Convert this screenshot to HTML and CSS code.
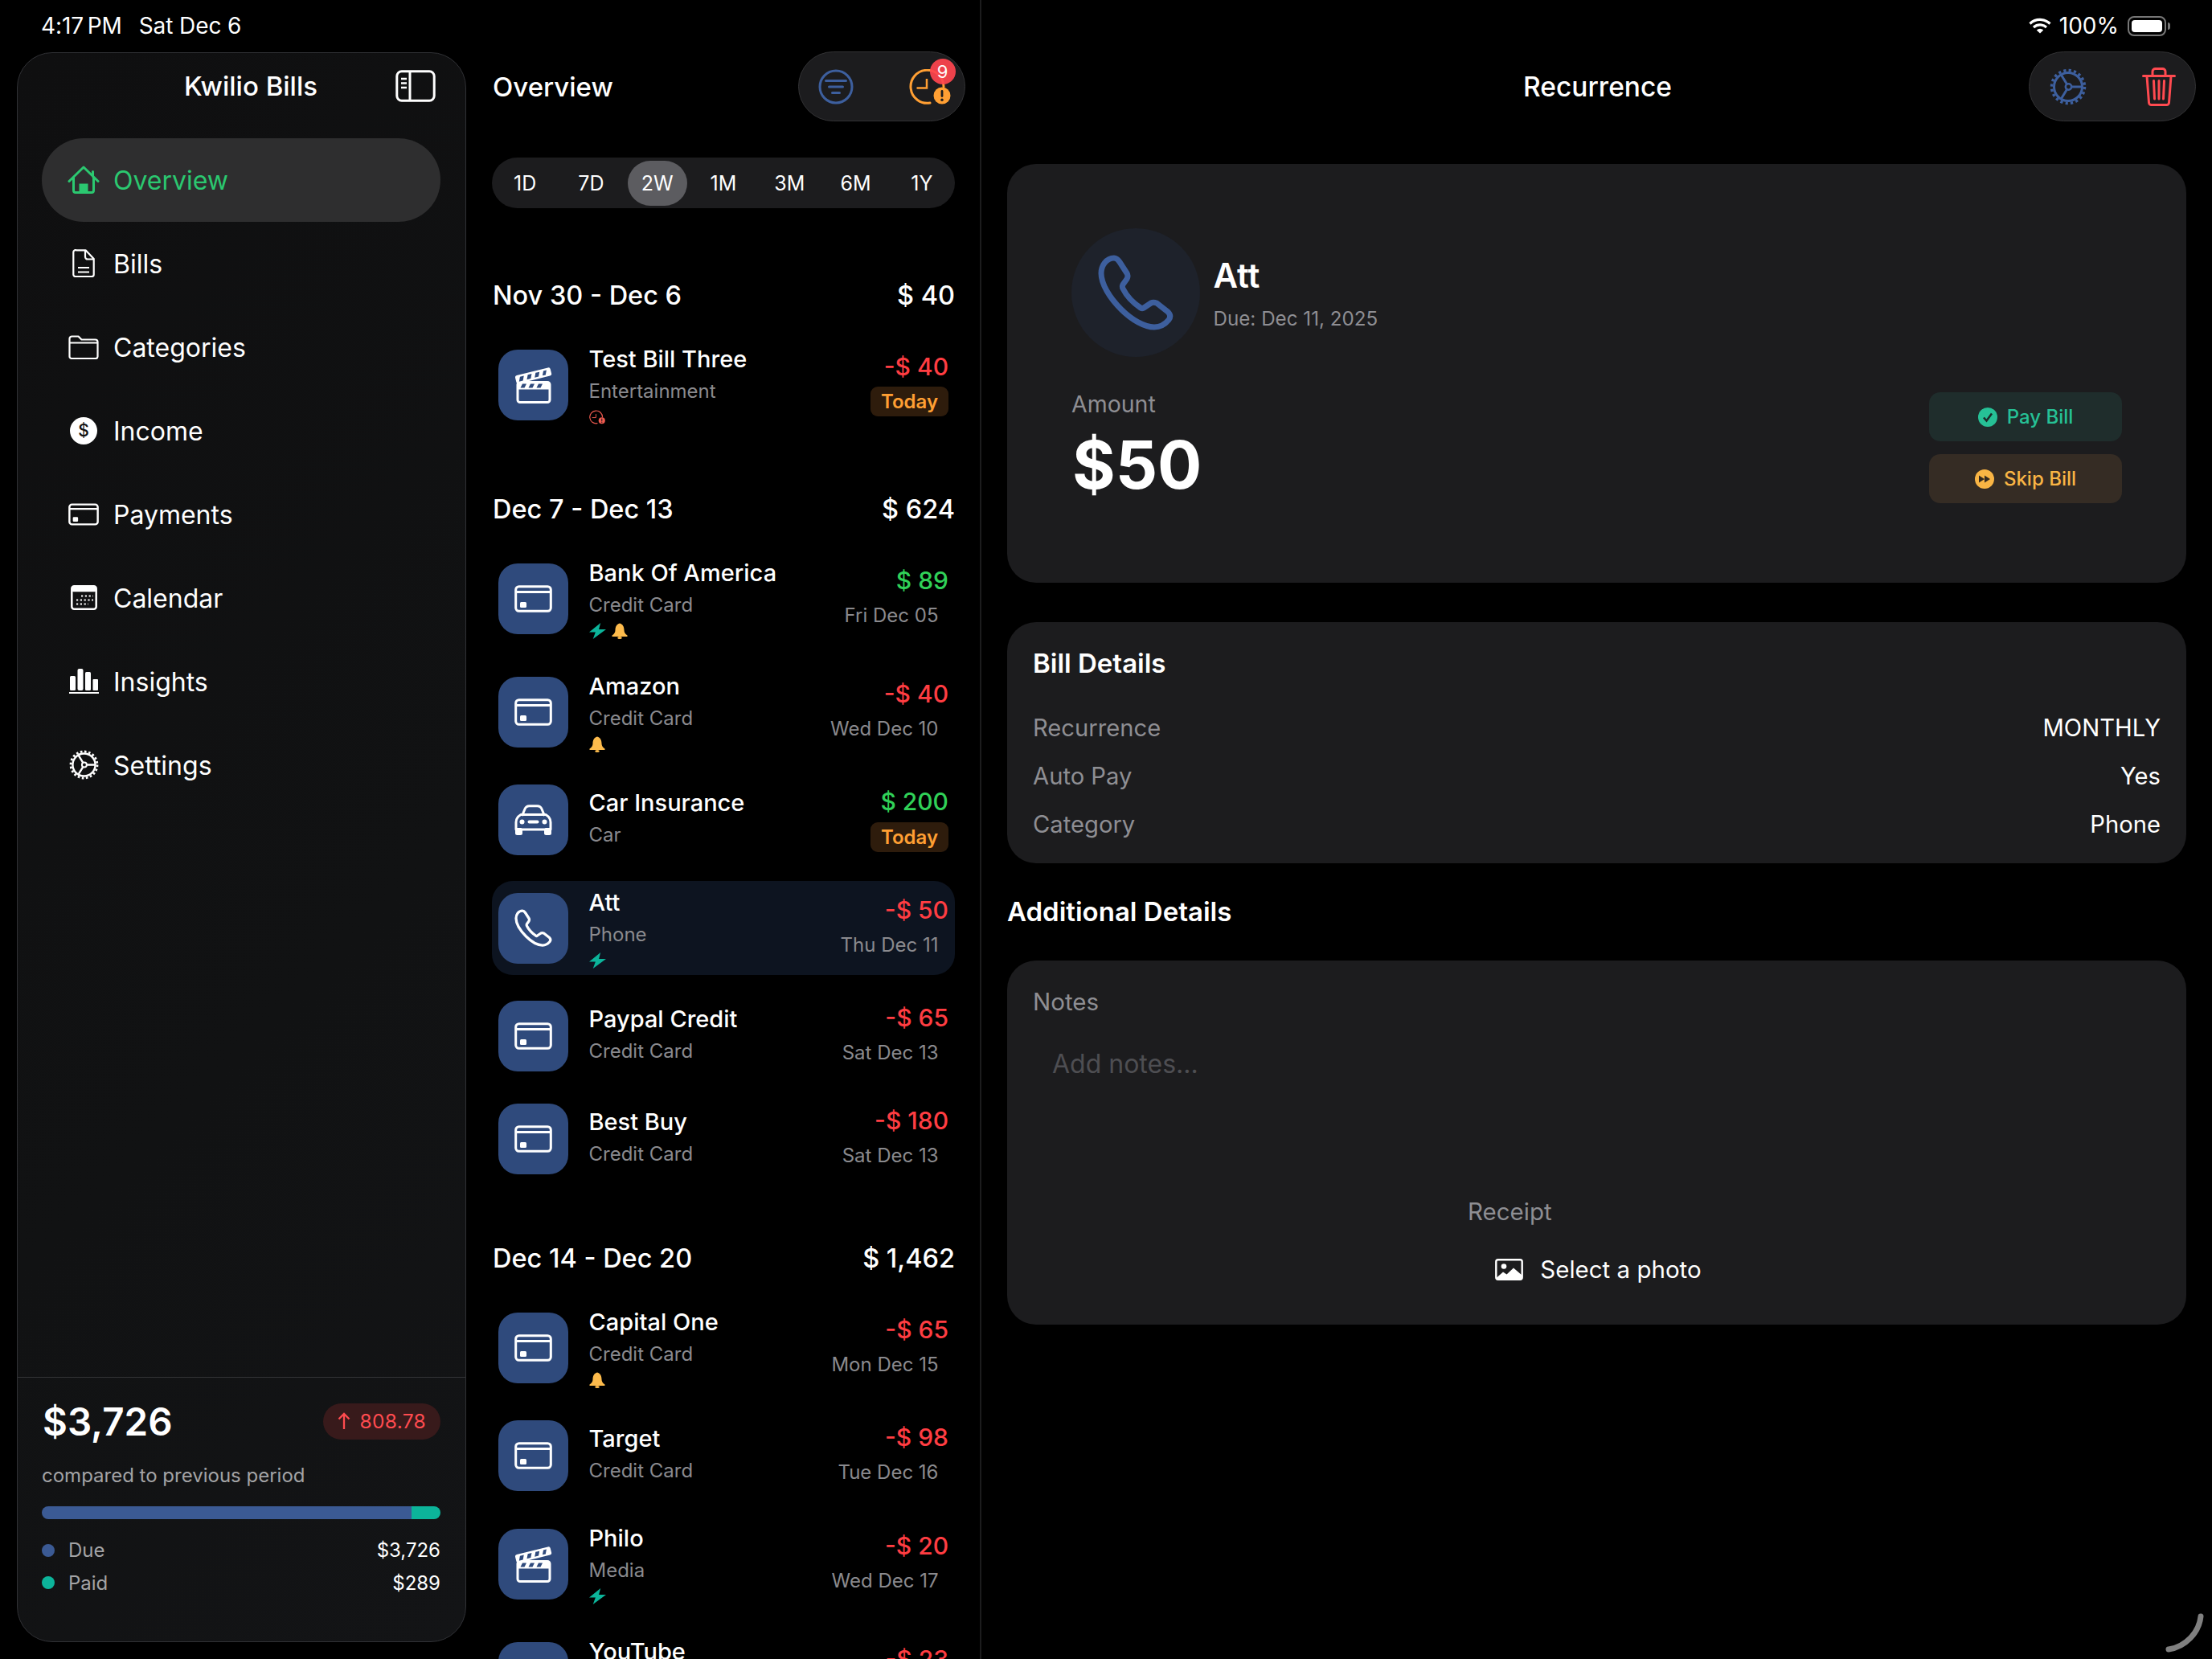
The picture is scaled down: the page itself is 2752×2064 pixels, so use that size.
FILE: index.html
```html
<!DOCTYPE html>
<html lang="en">
<head>
<meta charset="utf-8">
<title>Kwilio Bills</title>
<link rel="stylesheet" href="styles.css">
</head>
<body>
<svg class="defs" xmlns="http://www.w3.org/2000/svg">
  <symbol id="home" viewBox="0 0 40 35"><path d="M2 19.5 20 2l18 17.5M31.500 7.500v6M7.500 15v16a2.500 2.500 0 0 0 2.500 2.500h20a2.500 2.500 0 0 0 2.500-2.500V15" fill="none" stroke="currentColor" stroke-width="3" stroke-linecap="round" stroke-linejoin="round"/><rect x="14.500" y="22.500" width="11" height="11" fill="currentColor"/></symbol>
  <symbol id="file" viewBox="0 0 28 35"><path d="M5 1.300h11.500L26.700 12v19.500a2.500 2.500 0 0 1-2.500 2.500H4a2.500 2.500 0 0 1-2.700-2.500V4A2.700 2.700 0 0 1 5 1.300ZM16 1.500V9.500a3 3 0 0 0 3 3h7.500M7 23h14M7 28.500h14" fill="none" stroke="currentColor" stroke-width="2.200" stroke-linejoin="round"/></symbol>
  <symbol id="folder" viewBox="0 0 38 30"><path d="M1.500 4.500a3 3 0 0 1 3-3h8l4 4h17a3 3 0 0 1 3 3v18a2.500 2.500 0 0 1-2.500 2.500H4a2.500 2.500 0 0 1-2.500-2.500ZM1.500 9.500h35" fill="none" stroke="currentColor" stroke-width="2.200" stroke-linejoin="round"/></symbol>
  <symbol id="card" viewBox="0 0 47 34"><rect x="1.700" y="1.700" width="43.600" height="30.600" rx="4" fill="none" stroke="currentColor" stroke-width="3"/><path d="M2 8.500h43" stroke="currentColor" stroke-width="3"/><rect x="7" y="21" width="8" height="7" rx="1.500" fill="currentColor"/></symbol>
  <symbol id="calendar" viewBox="0 0 33 31"><rect x="1.300" y="1.300" width="30.400" height="28.400" rx="3" fill="none" stroke="currentColor" stroke-width="2.500"/><rect x="1.300" y="1.300" width="30.400" height="7" rx="2" fill="currentColor"/><path d="M13 13.500h15M7 18.500h21M7 23.500h15" stroke="currentColor" stroke-width="2.200" stroke-dasharray="2.200 2.600" fill="none"/></symbol>
  <symbol id="bars" viewBox="0 0 37 31"><rect x="1" y="9" width="7" height="18" rx="1.500" fill="currentColor"/><rect x="10.500" y="0" width="7" height="27" rx="2" fill="currentColor"/><rect x="20" y="4" width="7" height="23" rx="1.500" fill="currentColor"/><rect x="29.500" y="13" width="6.500" height="14" rx="1" fill="currentColor"/><rect x="0" y="29" width="37" height="2" fill="currentColor"/></symbol>
  <symbol id="gear" viewBox="0 0 46 46"><circle cx="23" cy="23" r="17.500" fill="none" stroke="currentColor" stroke-width="3"/><circle cx="23" cy="23" r="20.500" fill="none" stroke="currentColor" stroke-width="3.500" stroke-dasharray="3.220 3.220"/><circle cx="23.500" cy="23" r="3.700" fill="none" stroke="currentColor" stroke-width="2.500"/><path d="M27.500 23H41M21.500 19.800 14 7.500M21.500 26.200 14 38.500" stroke="currentColor" stroke-width="3" fill="none"/></symbol>
  <symbol id="filter" viewBox="0 0 44 44"><circle cx="22" cy="22" r="20" fill="none" stroke="currentColor" stroke-width="3"/><path d="M9.500 14.500h25M13.500 22h17M17.500 29.500h9" stroke="currentColor" stroke-width="3" stroke-linecap="round"/></symbol>
  <symbol id="clock" viewBox="0 0 52 44"><path d="M43 22A20.500 20.500 0 1 0 26 42" fill="none" stroke="currentColor" stroke-width="3" stroke-linecap="round"/><path d="M22 12v11.500H9.500" fill="none" stroke="currentColor" stroke-width="2.500"/><circle cx="41" cy="33" r="10.500" fill="currentColor"/><rect x="39.600" y="26" width="2.800" height="9" rx="1.400" fill="#1c1c1e"/><circle cx="41" cy="38.300" r="1.700" fill="#1c1c1e"/></symbol>
  <symbol id="trash" viewBox="0 0 42 48"><path d="M1.500 10.500h39M13 10V5a3.500 3.500 0 0 1 3.500-3.500h9A3.500 3.500 0 0 1 29 5v5M6 11l2.500 32.500a3 3 0 0 0 3 3h19a3 3 0 0 0 3-3L36 11M14.500 16.500 15.500 39M21 16.500V39M27.500 16.500 26.500 39" fill="none" stroke="currentColor" stroke-width="3" stroke-linecap="round" stroke-linejoin="round"/></symbol>
  <symbol id="clapper" viewBox="0 0 46 46"><rect x="3" y="19.500" width="40" height="25" rx="3" fill="none" stroke="currentColor" stroke-width="3"/><rect x="3" y="19.500" width="40" height="9" fill="currentColor"/><path d="M9 21.500h5l-2.500 5h-5ZM19 21.500h5l-2.500 5h-5ZM29 21.500h5l-2.500 5h-5Z" fill="#2f4a7c"/><g transform="rotate(-14 23 11)"><rect x="0" y="6" width="45" height="10.500" rx="2.500" fill="currentColor"/><path d="M6 8.500h5l-2.500 5.500h-5ZM16 8.500h5l-2.500 5.500h-5ZM26 8.500h5l-2.500 5.500h-5ZM36 8.500h4l-2.500 5.500h-4Z" fill="#2f4a7c"/></g></symbol>
  <symbol id="car" viewBox="0 0 47 38"><path d="M9.500 14 13 5.500Q14.500 1.700 18.500 1.700h10q4 0 5.500 3.800L37.500 14" fill="none" stroke="currentColor" stroke-width="3"/><path d="M2 22q0-6 6-9.500h31q6 3.500 6 9.500v9H2Z" fill="none" stroke="currentColor" stroke-width="3" stroke-linejoin="round"/><rect x="1" y="29" width="9" height="9" rx="2.500" fill="currentColor"/><rect x="37" y="29" width="9" height="9" rx="2.500" fill="currentColor"/><circle cx="9.500" cy="21.500" r="3" fill="currentColor"/><circle cx="37.500" cy="21.500" r="3" fill="currentColor"/><rect x="16.500" y="19.500" width="14" height="4" rx="2" fill="currentColor"/></symbol>
  <symbol id="phone" viewBox="0 0 94 94"><path d="M20 4C23 4 25 6 27 9L36 23C38 26 37 28 36 30L31 37C30 39 30 40 31 42C36 52 44 60 53 66C54 67 56 67 57 66L66 60C68 59 70 59 73 60L87 71C90 74 91 77 88 81C83 87 77 90 70 90C58 90 42 81 29 68C14 53 4 36 4 23C4 14 10 4 20 4Z" fill="none" stroke="currentColor" stroke-width="var(--phone-w,7)" stroke-linejoin="round"/></symbol>
  <symbol id="bolt" viewBox="0 0 20 19"><path d="M13.500 0 0 11h7.500L4.500 19 20 7.500h-8.500Z" fill="currentColor"/></symbol>
  <symbol id="bell" viewBox="0 0 20 20"><path d="M10 0.500C6 1.500 4.500 5 4.500 9 4.500 12 3 14 .5 15.500V17h19v-1.500C17 14 15.500 12 15.500 9 15.500 5 14 1.500 10 .5Z" fill="currentColor"/><ellipse cx="10" cy="18.500" rx="2.800" ry="1.500" fill="currentColor"/></symbol>
</svg>

<div class="status">
  <div class="status-left"><span class="time">4:17 PM</span><span>Sat Dec 6</span></div>
  <div class="status-right">
    <svg class="wifi" viewBox="0 0 28 20"><path d="M1.500 7.500a18 18 0 0 1 25 0M6 12a12 12 0 0 1 16 0" fill="none" stroke="#fff" stroke-width="3.200"/><path d="M14 19.500 9.800 15.500a6 6 0 0 1 8.400 0Z" fill="#fff"/></svg>
    <span>100%</span>
    <div class="battery"><div class="battery-fill"></div></div>
    <div class="battery-nub"></div>
  </div>
</div>

<div class="app">
  <aside class="sidebar">
    <div class="side-head">
      <div class="side-title">Kwilio Bills</div>
      <svg class="toggle" viewBox="0 0 50 40"><rect x="1.800" y="1.800" width="46.400" height="36.400" rx="6" fill="none" stroke="#fff" stroke-width="3"/><path d="M18 2v36" stroke="#fff" stroke-width="3"/><path d="M7 11h7M7 16.500h7M7 22h7" stroke="#fff" stroke-width="2.500"/></svg>
    </div>
    <nav class="nav">
      <div class="nav-item active"><span class="nav-icon"><svg class="i-home"><use href="#home"/></svg></span><span class="nav-label">Overview</span></div>
      <div class="nav-item"><span class="nav-icon"><svg class="i-file"><use href="#file"/></svg></span><span class="nav-label">Bills</span></div>
      <div class="nav-item"><span class="nav-icon"><svg class="i-folder"><use href="#folder"/></svg></span><span class="nav-label">Categories</span></div>
      <div class="nav-item"><span class="nav-icon"><span class="coin">$</span></span><span class="nav-label">Income</span></div>
      <div class="nav-item"><span class="nav-icon"><svg class="i-navcard"><use href="#card"/></svg></span><span class="nav-label">Payments</span></div>
      <div class="nav-item"><span class="nav-icon"><svg class="i-cal"><use href="#calendar"/></svg></span><span class="nav-label">Calendar</span></div>
      <div class="nav-item"><span class="nav-icon"><svg class="i-bars"><use href="#bars"/></svg></span><span class="nav-label">Insights</span></div>
      <div class="nav-item"><span class="nav-icon"><svg class="i-gear"><use href="#gear"/></svg></span><span class="nav-label">Settings</span></div>
    </nav>
    <div class="side-foot">
      <div class="foot-top">
        <div class="foot-total">$3,726</div>
        <div class="foot-badge"><svg class="up" viewBox="0 0 16 22"><path d="M8 21V2M1.500 8.500 8 2l6.500 6.500" fill="none" stroke="currentColor" stroke-width="2.300"/></svg>808.78</div>
      </div>
      <div class="foot-note">compared to previous period</div>
      <div class="bar"><div class="bar-due"></div><div class="bar-paid"></div></div>
      <div class="legend"><span class="dot dot-due"></span><span class="legend-label">Due</span><span class="legend-val">$3,726</span></div>
      <div class="legend"><span class="dot dot-paid"></span><span class="legend-label">Paid</span><span class="legend-val">$289</span></div>
    </div>
  </aside>

  <main class="middle">
    <header class="mid-head">
      <h1 class="mid-title">Overview</h1>
      <div class="pill">
        <svg class="pill-icon blue i-filter"><use href="#filter"/></svg>
        <div class="pill-clock">
          <svg class="pill-icon orange"><use href="#clock"/></svg>
          <span class="count">9</span>
        </div>
      </div>
    </header>
    <div class="segments">
      <span class="seg">1D</span><span class="seg">7D</span><span class="seg on">2W</span><span class="seg">1M</span><span class="seg">3M</span><span class="seg">6M</span><span class="seg">1Y</span>
    </div>

    <section class="group first">
      <div class="week"><span>Nov 30 - Dec 6</span><span>$ 40</span></div>
      <div class="row three">
        <span class="tile"><svg class="t-clapper"><use href="#clapper"/></svg></span>
        <div class="info"><div class="name">Test Bill Three</div><div class="cat">Entertainment</div><div class="marks"><svg class="m-clock"><use href="#clock"/></svg></div></div>
        <div class="money"><div class="amt neg">-$ 40</div><div class="today">Today</div></div>
      </div>
    </section>

    <section class="group">
      <div class="week"><span>Dec 7 - Dec 13</span><span>$ 624</span></div>
      <div class="row three">
        <span class="tile"><svg class="t-card"><use href="#card"/></svg></span>
        <div class="info"><div class="name">Bank Of America</div><div class="cat">Credit Card</div><div class="marks"><svg class="m-bolt"><use href="#bolt"/></svg><svg class="m-bell"><use href="#bell"/></svg></div></div>
        <div class="money"><div class="amt pos">$ 89</div><div class="when">Fri Dec 05</div></div>
      </div>
      <div class="row three">
        <span class="tile"><svg class="t-card"><use href="#card"/></svg></span>
        <div class="info"><div class="name">Amazon</div><div class="cat">Credit Card</div><div class="marks"><svg class="m-bell"><use href="#bell"/></svg></div></div>
        <div class="money"><div class="amt neg">-$ 40</div><div class="when">Wed Dec 10</div></div>
      </div>
      <div class="row two">
        <span class="tile"><svg class="t-car"><use href="#car"/></svg></span>
        <div class="info"><div class="name">Car Insurance</div><div class="cat">Car</div></div>
        <div class="money"><div class="amt pos">$ 200</div><div class="today">Today</div></div>
      </div>
      <div class="row three selected">
        <span class="tile"><svg class="t-phone"><use href="#phone"/></svg></span>
        <div class="info"><div class="name">Att</div><div class="cat">Phone</div><div class="marks"><svg class="m-bolt"><use href="#bolt"/></svg></div></div>
        <div class="money"><div class="amt neg">-$ 50</div><div class="when">Thu Dec 11</div></div>
      </div>
      <div class="row two">
        <span class="tile"><svg class="t-card"><use href="#card"/></svg></span>
        <div class="info"><div class="name">Paypal Credit</div><div class="cat">Credit Card</div></div>
        <div class="money"><div class="amt neg">-$ 65</div><div class="when">Sat Dec 13</div></div>
      </div>
      <div class="row two">
        <span class="tile"><svg class="t-card"><use href="#card"/></svg></span>
        <div class="info"><div class="name">Best Buy</div><div class="cat">Credit Card</div></div>
        <div class="money"><div class="amt neg">-$ 180</div><div class="when">Sat Dec 13</div></div>
      </div>
    </section>

    <section class="group">
      <div class="week"><span>Dec 14 - Dec 20</span><span>$ 1,462</span></div>
      <div class="row three">
        <span class="tile"><svg class="t-card"><use href="#card"/></svg></span>
        <div class="info"><div class="name">Capital One</div><div class="cat">Credit Card</div><div class="marks"><svg class="m-bell"><use href="#bell"/></svg></div></div>
        <div class="money"><div class="amt neg">-$ 65</div><div class="when">Mon Dec 15</div></div>
      </div>
      <div class="row two">
        <span class="tile"><svg class="t-card"><use href="#card"/></svg></span>
        <div class="info"><div class="name">Target</div><div class="cat">Credit Card</div></div>
        <div class="money"><div class="amt neg">-$ 98</div><div class="when">Tue Dec 16</div></div>
      </div>
      <div class="row three">
        <span class="tile"><svg class="t-clapper"><use href="#clapper"/></svg></span>
        <div class="info"><div class="name">Philo</div><div class="cat">Media</div><div class="marks"><svg class="m-bolt"><use href="#bolt"/></svg></div></div>
        <div class="money"><div class="amt neg">-$ 20</div><div class="when">Wed Dec 17</div></div>
      </div>
      <div class="row three">
        <span class="tile"></span>
        <div class="info"><div class="name">YouTube</div><div class="cat">&nbsp;</div><div class="marks"></div></div>
        <div class="money"><div class="amt neg">-$ 23</div><div class="when">&nbsp;</div></div>
      </div>
    </section>
  </main>

  <section class="detail">
    <header class="detail-head">
      <div></div>
      <h2 class="detail-title">Recurrence</h2>
      <div class="pill pill-end">
        <svg class="pill-icon blue i-pgear"><use href="#gear"/></svg>
        <svg class="pill-icon red i-trash"><use href="#trash"/></svg>
      </div>
    </header>

    <div class="card hero">
      <div class="hero-left">
        <div class="hero-top">
          <span class="avatar"><svg class="avatar-phone"><use href="#phone"/></svg></span>
          <div>
            <div class="hero-name">Att</div>
            <div class="hero-due">Due: Dec 11, 2025</div>
          </div>
        </div>
        <div class="hero-label">Amount</div>
        <div class="hero-amount">$50</div>
      </div>
      <div class="hero-actions">
        <div class="action pay">
          <svg class="action-icon" viewBox="0 0 24 24"><circle cx="12" cy="12" r="12" fill="#26c196"/><path d="M7 12.500 10.500 16.500 17 7.500" fill="none" stroke="#1c2b29" stroke-width="2.600"/></svg>
          Pay Bill
        </div>
        <div class="action skip">
          <svg class="action-icon" viewBox="0 0 24 24"><circle cx="12" cy="12" r="12" fill="#f9b544"/><path d="M5 7.500v9l7-4.500ZM12 7.500v9l7-4.500Z" fill="#33291f"/></svg>
          Skip Bill
        </div>
      </div>
    </div>

    <div class="card details">
      <h3 class="card-title">Bill Details</h3>
      <div class="detail-rows">
        <div class="detail-row"><span class="muted">Recurrence</span><span>MONTHLY</span></div>
        <div class="detail-row"><span class="muted">Auto Pay</span><span>Yes</span></div>
        <div class="detail-row"><span class="muted">Category</span><span>Phone</span></div>
      </div>
    </div>

    <h3 class="section-title">Additional Details</h3>

    <div class="card notes">
      <div class="muted notes-label">Notes</div>
      <div class="placeholder">Add notes...</div>
      <div class="muted receipt">Receipt</div>
      <div class="select-photo">
        <svg class="photo-icon" viewBox="0 0 35 27"><rect x="1.300" y="1.300" width="32.400" height="24.400" rx="2.500" fill="none" stroke="#fff" stroke-width="2.400"/><circle cx="11" cy="9.500" r="3.300" fill="#fff"/><path d="M1.500 24 10 16.500 14.500 19.500 23 11.500 33.500 20.500V26H1.500Z" fill="#fff"/></svg>
        Select a photo
      </div>
    </div>
  </section>
</div>

<svg class="pencil" viewBox="0 0 60 60"><path d="M49 10C47 30 30 48 9 51" fill="none" stroke="#808080" stroke-width="7" stroke-linecap="round"/></svg>
</body>
</html>
```

FILE: styles.css
```css
* { box-sizing: border-box; }
html, body { margin: 0; padding: 0; }
body {
  width: 2752px;
  height: 2064px;
  overflow: hidden;
  background: #000;
  color: #fff;
  font-family: Inter, "Liberation Sans", sans-serif;
  position: relative;
}
h1, h2, h3 { margin: 0; font: inherit; }
svg { display: block; flex: none; }
.defs { display: none; }

/* status bar */
.status {
  position: absolute;
  top: 0; left: 0; right: 0;
  height: 64px;
  padding: 0 52px 0 51px;
  display: flex;
  align-items: center;
  justify-content: space-between;
  font-size: 28px;
  z-index: 2;
}
.status-left { display: flex; gap: 21px; letter-spacing: -.1px; }
.time { word-spacing: -3px; }
.status-right { display: flex; align-items: center; }
.wifi { width: 28px; height: 20px; margin-right: 10px; }
.battery {
  width: 48px; height: 25px;
  margin-left: 11px;
  border: 2px solid #777;
  border-radius: 8px;
  padding: 3px;
}
.battery-fill { width: 100%; height: 100%; background: #fff; border-radius: 4px; }
.battery-nub { width: 3px; height: 9px; margin-left: 2px; background: #777; border-radius: 0 3px 3px 0; }

.app { display: flex; height: 2064px; }

/* sidebar */
.sidebar {
  width: 559px;
  margin: 65px 0 21px 21px;
  flex: none;
  display: flex;
  flex-direction: column;
  background: linear-gradient(135deg, #0f0f10 0%, #111213 60%, #131416 100%);
  border: 1.5px solid #303135;
  border-radius: 44px;
}
.side-head {
  height: 105.500px;
  padding: 21px 37px 0 110px;
  display: flex;
  align-items: flex-start;
}
.side-title { flex: 1; text-align: center; font-size: 33px; line-height: 40px; font-weight: 500; }
.toggle { width: 50px; height: 40px; }
.nav { padding: 0 31px 0 30px; flex: 1; }
.nav-item {
  height: 104px;
  display: flex;
  align-items: center;
  padding-left: 32px;
  gap: 17px;
  font-size: 32px;
  border-radius: 52px;
  color: #fff;
}
.nav-label { padding-top: 2px; }
.nav-item.active {
  background: #2e2e2f;
  color: #2bc870;
}
.nav-icon { width: 40px; display: flex; justify-content: center; align-items: center; }
.i-home { width: 40px; height: 35px; }
.i-file { width: 28px; height: 35px; }
.i-folder { width: 38px; height: 30px; }
.i-navcard { width: 38px; height: 28px; }
.i-cal { width: 33px; height: 31px; }
.i-bars { width: 37px; height: 31px; }
.i-gear { width: 37px; height: 37px; }
.coin {
  width: 34px; height: 34px;
  border-radius: 50%;
  background: #fff;
  color: #111;
  font-size: 21px;
  font-weight: 500;
  display: flex;
  align-items: center;
  justify-content: center;
}

.side-foot {
  height: 329px;
  flex: none;
  border-top: 1.5px solid #333437;
  padding: 31.500px 31px 0 30px;
}
.foot-top { display: flex; justify-content: space-between; align-items: center; height: 45px; }
.foot-total { font-size: 47.500px; font-weight: 600; padding-left: 1px; }
.foot-badge {
  height: 45px;
  padding: 0 18px 0 18px;
  border-radius: 23px;
  background: #381a1b;
  color: #ff4b4f;
  font-size: 24.500px;
  display: flex;
  align-items: center;
  gap: 12px;
  letter-spacing: .3px;
}
.up { width: 16px; height: 22px; }
.foot-note { margin-top: 27px; font-size: 24px; line-height: 36px; color: #a3a3a5; }
.bar { margin-top: 20px; height: 16px; border-radius: 8px; overflow: hidden; display: flex; }
.bar-due { width: 460px; background: #3b5a94; }
.bar-paid { flex: 1; background: #0cb49a; }
.legend { display: flex; align-items: center; height: 40.500px; font-size: 24px; }
.bar + .legend { margin-top: 19px; }
.dot { width: 16px; height: 16px; border-radius: 50%; margin-right: 17px; }
.dot-due { background: #3b5a94; }
.dot-paid { background: #0cb49a; }
.legend-label { flex: 1; color: #a3a3a5; }

/* middle column */
.middle {
  width: 641px;
  flex: none;
  padding: 64px 31px 0 32px;
  border-right: 2px solid #1c1c1d;
}
.mid-head { display: flex; justify-content: space-between; align-items: center; height: 87px; padding-left: 1px; margin-right: -13px; }
.mid-title { font-size: 33px; font-weight: 500; }
.pill {
  width: 208px;
  height: 87px;
  border-radius: 44px;
  background: #1c1c1e;
  border: 1.5px solid #323234;
  padding: 0 8px 0 20.500px;
  display: flex;
  align-items: center;
  gap: 69px;
  flex: none;
}
.pill-icon { width: 52px; height: 44px; }
.blue { color: #3d5f9e; }
.orange { color: #ff9f33; }
.red { color: #ff4a50; }
.i-filter { margin: 0 3px; width: 44px; }
.pill-clock { position: relative; width: 52px; height: 44px; margin-left: -3px; flex: none; }
.count {
  position: absolute;
  top: -13px; right: -6px;
  width: 32px; height: 32px;
  border-radius: 50%;
  background: rgba(255, 69, 79, .92);
  font-size: 22px;
  display: flex;
  align-items: center;
  justify-content: center;
}
.segments {
  margin-top: 45px;
  height: 63px;
  border-radius: 32px;
  background: #1c1c1e;
  display: flex;
  align-items: center;
  font-size: 25px;
}
.seg { flex: 1; height: 56px; display: flex; align-items: center; justify-content: center; margin: 0 4px; border-radius: 28px; }
.seg.on { background: #5c5c60; }

.group { margin-top: 74px; }
.group.first { margin-top: 86px; }
.week { display: flex; justify-content: space-between; height: 44px; align-items: center; font-size: 32.500px; font-weight: 500; margin-bottom: 31px; padding-left: 1px; }
.row {
  display: flex;
  align-items: center;
  padding: 0 8px;
  gap: 25.500px;
  margin-top: 24px;
  border-radius: 26px;
}
.week + .row { margin-top: 0; }
.row.three { height: 117px; }
.row.two { height: 104px; }
.row.selected { background: #0d1420; }
.tile {
  width: 87px;
  height: 88px;
  border-radius: 24px;
  background: #2f4a7c;
  display: flex;
  align-items: center;
  justify-content: center;
  color: #fff;
  flex: none;
}
.t-card { width: 47px; height: 34px; }
.t-clapper { width: 46px; height: 46px; }
.t-car { width: 47px; height: 38px; }
.t-phone { width: 47px; height: 47px; --phone-w: 6.500; }
.info { flex: 1; min-width: 0; }
.three .info { padding-top: 4px; }
.two .info { padding-bottom: 2px; }
.name { font-size: 29px; line-height: 40px; font-weight: 500; white-space: nowrap; }
.cat { font-size: 24px; line-height: 40px; color: #8a8a8e; white-space: nowrap; }
.marks { height: 32px; margin-top: -4px; display: flex; align-items: center; gap: 7px; }
.m-bolt { width: 21px; height: 20px; color: #0cb49a; }
.m-bell { width: 20px; height: 20px; color: #fdbb4c; }
.m-clock { width: 20px; height: 20px; color: #ee5a4f; }
.money { display: flex; flex-direction: column; align-items: flex-end; padding-bottom: 2px; }
.amt { font-size: 30px; line-height: 38px; font-weight: 500; }
.neg { color: #ff3d42; }
.pos { color: #30d158; }
.when { font-size: 24px; line-height: 38px; color: #8a8a8e; margin-top: 6px; padding-right: 12.500px; white-space: nowrap; }
.today {
  margin-top: 6.500px;
  height: 37px;
  width: 97px;
  border-radius: 9px;
  background: #2e1c0c;
  color: #ff9f33;
  font-size: 24px;
  font-weight: 600;
  display: flex;
  align-items: center;
  justify-content: center;
}

/* detail */
.detail { flex: 1; min-width: 0; padding: 64px 32px 0; }
.detail-head {
  display: grid;
  grid-template-columns: 1fr auto 1fr;
  align-items: center;
  height: 87px;
  margin: 0 -12px 0 -10px;
}
.detail-title { font-size: 33.500px; font-weight: 500; }
.pill-end { justify-self: end; gap: 68.500px; padding: 0 0 0 25px; justify-content: flex-start; }
.i-pgear { width: 46px; height: 46px; }
.i-trash { width: 42px; height: 48px; }
.card { background: #1c1c1e; border-radius: 36px; }
.hero {
  margin-top: 53px;
  height: 521px;
  padding: 80px 80px 0;
  display: flex;
  justify-content: space-between;
  align-items: flex-start;
}
.hero-top { display: flex; align-items: center; gap: 16.500px; height: 160px; }
.avatar { width: 160px; height: 160px; border-radius: 50%; background: #1e222b; color: #3d5f9e; display: flex; align-items: center; justify-content: center; }
.avatar-phone { width: 94px; height: 94px; }
.hero-name { font-size: 42px; line-height: 50px; font-weight: 600; padding-top: 2px; }
.hero-due { font-size: 24.200px; line-height: 32px; margin-top: 13px; color: #8e8e93; }
.hero-label { margin-top: 41px; font-size: 28.500px; line-height: 36px; color: #8e8e93; }
.hero-amount { margin-top: 13px; padding-left: 1px; font-size: 82px; line-height: 90px; font-weight: 700; }
.hero-actions { display: flex; flex-direction: column; gap: 16px; margin-top: 204px; }
.action {
  width: 240px;
  height: 61px;
  border-radius: 14px;
  display: flex;
  align-items: center;
  justify-content: center;
  gap: 12px;
  font-size: 24px;
  font-weight: 500;
}
.pay { background: #1f2d2c; color: #26c196; }
.skip { background: #352c24; color: #f9b544; }
.action-icon { width: 24px; height: 24px; }

.details { margin-top: 49px; height: 300px; padding: 30px 32px 0; }
.card-title, .section-title { font-size: 33px; line-height: 42px; font-weight: 600; }
.detail-rows { margin-top: 29px; }
.detail-row { display: flex; justify-content: space-between; align-items: center; height: 60px; font-size: 29.200px; }
.muted { color: #8e8e93; }
.section-title { margin-top: 39px; }
.notes { margin-top: 40px; height: 453px; padding: 32px 32px 0; font-size: 29.500px; }
.notes-label { line-height: 38px; }
.placeholder { margin: 37px 0 0 24px; font-size: 32px; line-height: 44px; color: #4e4e52; }
.receipt { margin: 142px 0 0 541px; line-height: 38px; }
.select-photo { margin-top: 31px; height: 44px; padding-left: 4px; display: flex; align-items: center; justify-content: center; gap: 21px; }
.photo-icon { width: 35px; height: 27px; }

.pencil { position: absolute; right: 3px; bottom: 3px; width: 60px; height: 60px; }
```
